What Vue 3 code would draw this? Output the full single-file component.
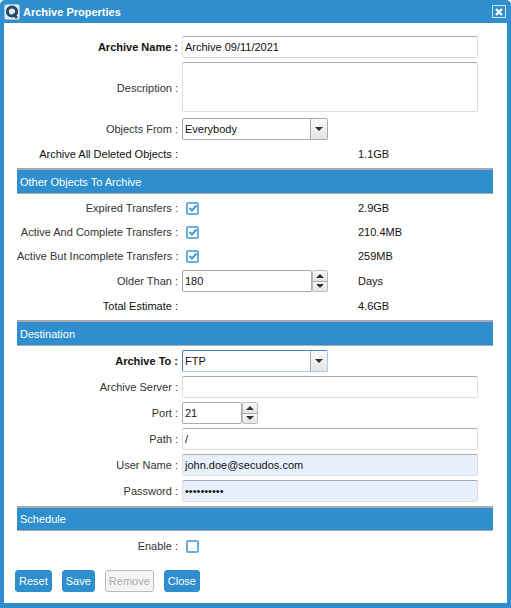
<script setup>
const transfers = [
  { label: 'Expired Transfers', size: '2.9GB' },
  { label: 'Active And Complete Transfers', size: '210.4MB' },
  { label: 'Active But Incomplete Transfers', size: '259MB' },
]
</script>

<template>
  <div class="dialog">
    <div class="titlebar">
      <svg class="logo" width="16" height="16" viewBox="0 0 16 16">
        <rect x="0.5" y="0.5" width="15" height="15" rx="2" fill="#dfe9f0" stroke="#9fc3dc" />
        <circle cx="8" cy="7.5" r="4.6" fill="none" stroke="#24475f" stroke-width="3" />
        <path d="M9 10l4 4" stroke="#24475f" stroke-width="2.5" />
      </svg>
      <span class="title">Archive Properties</span>
      <button class="close-x" type="button">
        <svg width="10" height="10" viewBox="0 0 10 10">
          <path d="M2 2l6 6M8 2l-6 6" stroke="#fff" stroke-width="2.4" />
        </svg>
      </button>
    </div>

    <div class="content">
      <div class="row first">
        <label class="bold">Archive Name :</label>
        <input class="field wide" type="text" value="Archive 09/11/2021" />
      </div>
      <div class="row desc">
        <label class="desc-label">Description :</label>
        <textarea class="field wide area"></textarea>
      </div>
      <div class="row sel-row">
        <label>Objects From :</label>
        <div class="combo">
          <span class="combo-text">Everybody</span>
          <span class="combo-btn"><i class="arrow-down"></i></span>
        </div>
      </div>
      <div class="row text-row">
        <label class="dark">Archive All Deleted Objects :</label>
        <span class="size">1.1GB</span>
      </div>

      <div class="section">Other Objects To Archive</div>
      <div v-for="t in transfers" :key="t.label" class="row check-row">
        <label>{{ t.label }} :</label>
        <span class="check"><svg width="10" height="10" viewBox="0 0 10 10"><path d="M1.5 5l2.5 2.5 4.5-5" fill="none" stroke="#3f96d2" stroke-width="2" /></svg></span>
        <span class="size">{{ t.size }}</span>
      </div>
      <div class="row older">
        <label>Older Than :</label>
        <div class="spinner long">
          <input class="spin-input" type="text" value="180" />
          <span class="spin-btns"><span class="up"><i class="arrow-up"></i></span><span class="down"><i class="arrow-down"></i></span></span>
        </div>
        <span class="size">Days</span>
      </div>
      <div class="row text-row">
        <label class="dark">Total Estimate :</label>
        <span class="size">4.6GB</span>
      </div>

      <div class="section">Destination</div>
      <div class="row input-row">
        <label class="bold">Archive To :</label>
        <div class="combo focus">
          <span class="combo-text">FTP</span>
          <span class="combo-btn"><i class="arrow-down"></i></span>
        </div>
      </div>
      <div class="row input-row">
        <label>Archive Server :</label>
        <input class="field wide" type="text" value="" />
      </div>
      <div class="row input-row">
        <label>Port :</label>
        <div class="spinner short">
          <input class="spin-input" type="text" value="21" />
          <span class="spin-btns"><span class="up"><i class="arrow-up"></i></span><span class="down"><i class="arrow-down"></i></span></span>
        </div>
      </div>
      <div class="row input-row">
        <label>Path :</label>
        <input class="field wide" type="text" value="/" />
      </div>
      <div class="row input-row">
        <label>User Name :</label>
        <input class="field wide filled" type="text" value="john.doe@secudos.com" />
      </div>
      <div class="row input-row">
        <label>Password :</label>
        <input class="field wide filled" type="password" value="secretpas1" />
      </div>

      <div class="section sched">Schedule</div>
      <div class="row enable">
        <label>Enable :</label>
        <span class="check"></span>
      </div>

      <div class="actions">
        <button class="btn" type="button">Reset</button>
        <button class="btn" type="button">Save</button>
        <button class="btn off" type="button">Remove</button>
        <button class="btn" type="button">Close</button>
      </div>
    </div>
  </div>
</template>

<style scoped>
.dialog {
  width: 511px;
  height: 608px;
  box-sizing: border-box;
  background: #2e8ece;
  border-radius: 5px 5px 0 0;
  padding: 0 4px 5px;
  display: flex;
  flex-direction: column;
  font-family: "Liberation Sans", Arial, sans-serif;
  font-size: 11px;
  color: #333;
  overflow: hidden;
}

.titlebar {
  height: 23px;
  flex: none;
  display: flex;
  align-items: center;
  color: #fff;
  font-weight: bold;
}

.logo {
  margin: 0 3px 0 0;
  flex: none;
}

.title {
  flex: 1;
}

.close-x {
  width: 14px;
  height: 13px;
  padding: 0;
  margin-right: 1px;
  border: 1px solid #d5e7f4;
  background: #2e8ece;
  display: flex;
  align-items: center;
  justify-content: center;
}

.content {
  flex: 1;
  background: #fff;
  padding: 13px 14px 0 13px;
}

.row {
  display: grid;
  grid-template-columns: 161px 172px 1fr;
  column-gap: 4px;
  align-items: center;
}

.row label {
  text-align: right;
  white-space: nowrap;
}

.bold {
  font-weight: bold;
  color: #111;
}

.dark,
.size {
  color: #111;
}

.field {
  box-sizing: border-box;
  height: 22px;
  padding: 0 2px;
  border: 1px solid #ddd;
  border-top: 1px solid #aaa;
  border-radius: 2px;
  font: 11px "Liberation Sans", Arial, sans-serif;
  color: #111;
  outline: none;
  background: #fff;
}

.wide {
  grid-column: 2 / 4;
  width: 296px;
}

.area {
  height: 50px;
  resize: none;
  display: block;
}

.filled {
  background: #e8f0fe;
}

.desc {
  margin-top: 4px;
}

.desc-label {
  padding-top: 2px;
}

.sel-row {
  margin-top: 6px;
}

.text-row {
  height: 20px;
  margin-top: 4px;
}

.input-row {
  margin-top: 4px;
}

.combo {
  box-sizing: border-box;
  width: 146px;
  height: 22px;
  border: 1px solid #aaa;
  border-radius: 2px;
  display: flex;
  align-items: center;
  color: #111;
}

.combo.focus {
  border-color: #a8cbe6;
  border-top-color: #4a82b0;
  border-left-color: #4a82b0;
}

.combo-text {
  flex: 1;
  padding-left: 2px;
}

.combo-btn {
  width: 16px;
  height: 100%;
  border-left: 1px solid #aaa;
  background: linear-gradient(#fafafa, #e4e4e4);
  display: flex;
  align-items: center;
  justify-content: center;
}

.arrow-down,
.arrow-up {
  display: block;
  width: 0;
  height: 0;
  border-left: 4px solid transparent;
  border-right: 4px solid transparent;
}

.arrow-down {
  border-top: 4px solid #333;
}

.arrow-up {
  border-bottom: 4px solid #333;
}

.size {
  grid-column: 3;
}

.section {
  height: 26px;
  box-sizing: border-box;
  margin-top: 4px;
  border-top: 2px solid #aaa;
  border-bottom: 1px solid #aaa;
  background: #2e8ece;
  color: #fff;
  display: flex;
  align-items: center;
  padding-left: 3px;
}

.sched {
  height: 25px;
}

.check-row {
  height: 24px;
}

.section + .check-row {
  margin-top: 2px;
}

.check {
  box-sizing: border-box;
  width: 13px;
  height: 13px;
  margin-left: 4px;
  border: 2px solid #6aaede;
  border-radius: 2px;
  display: flex;
  align-items: center;
  justify-content: center;
  background: #fff;
}

.check svg {
  flex: none;
}

.older {
  margin-top: 2px;
}

.spinner {
  box-sizing: border-box;
  height: 22px;
  display: flex;
}

.spinner.long {
  width: 146px;
}

.spinner.short {
  width: 76px;
}

.spin-input {
  flex: 1;
  min-width: 0;
  box-sizing: border-box;
  border: 1px solid #aaa;
  border-radius: 2px;
  padding: 0 2px;
  font: 11px "Liberation Sans", Arial, sans-serif;
  color: #111;
  outline: none;
}

.spin-btns {
  width: 16px;
  display: flex;
  flex-direction: column;
  flex: none;
  box-sizing: border-box;
  border: 1px solid #bbb;
  border-radius: 2px;
}

.spin-btns .up,
.spin-btns .down {
  flex: 1;
  display: flex;
  align-items: center;
  justify-content: center;
  background: linear-gradient(#fafafa, #e4e4e4);
}

.spin-btns .down {
  border-top: 1px solid #aaa;
}

.enable {
  height: 30px;
}

.actions {
  display: flex;
  gap: 10px;
  margin: 9px 0 0 -2px;
}

.btn {
  height: 22px;
  padding: 0 3px;
  border: 1px solid #2e8ece;
  border-radius: 3px;
  background: #2e8ece;
  color: #fff;
  font: 11px "Liberation Sans", Arial, sans-serif;
}

.btn.off {
  background: #f4f4f4;
  color: #aaa;
  border-color: #bbb;
}
</style>
